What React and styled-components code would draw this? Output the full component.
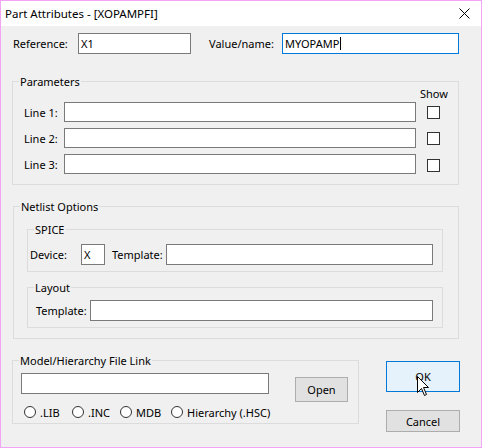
import styled, { createGlobalStyle } from 'styled-components';

// Global reset
const GlobalStyle = createGlobalStyle`
  html, body {
    margin: 0;
    padding: 0;
    background: #ffffff;
  }
  * {
    box-sizing: border-box;
  }
`;

// Styled components
const Window = styled.div`
  position: relative;
  width: 482px;
  height: 448px;
  display: flex;
  flex-direction: column;
  border: 1px solid #f4a4f4;
  background: #f0f0f0;
  font-family: "Noto Sans", "Liberation Sans", sans-serif;
  font-size: 11px;
  color: #000;
`;

const TitleBar = styled.div`
  height: 25px;
  flex: none;
  display: flex;
  align-items: center;
  justify-content: space-between;
  padding: 0 11px 0 4px;
  background: #ffffff;
  font-size: 11.5px;
`;

const Body = styled.div`
  display: flex;
  flex-direction: column;
  padding: 7px 0 0 11px;
`;

const Row = styled.div`
  display: flex;
  align-items: ${(p) => p.$align || 'center'};
  margin-left: ${(p) => p.$indent || 0}px;
  margin-top: ${(p) => p.$top || 0}px;
`;

const Label = styled.span`
  width: ${(p) => p.$w}px;
  flex: none;
  margin-left: ${(p) => p.$ml || 0}px;
  line-height: 15px;
  white-space: nowrap;
`;

const TextBox = styled.div`
  width: ${(p) => p.$w}px;
  height: ${(p) => p.$h || 21}px;
  flex: none;
  display: flex;
  align-items: center;
  padding-left: 2px;
  background: #fff;
  border: 1px solid ${(p) => (p.$focus ? '#0078d7' : '#7a7a7a')};
  white-space: nowrap;
`;

const Caret = styled.span`
  display: inline-block;
  width: 1px;
  height: 13px;
  margin-left: 1px;
  background: #000;
`;

const Group = styled.div`
  position: relative;
  width: ${(p) => p.$w}px;
  flex: none;
  margin-top: ${(p) => p.$top || 0}px;
  margin-left: ${(p) => p.$ml || 0}px;
  padding: ${(p) => p.$pad};
  border: 1px solid #dcdcdc;
`;

const Caption = styled.span`
  position: absolute;
  top: -8px;
  left: 6px;
  padding: 0 1px;
  line-height: 15px;
  background: #f0f0f0;
  white-space: nowrap;
`;

const ParamList = styled.div`
  display: flex;
  flex-direction: column;
  gap: 6px;
`;

const ShowHead = styled.div`
  display: flex;
  justify-content: flex-end;
  height: 16px;
  margin-bottom: -6px;
`;

const CheckCell = styled.div`
  width: 27px;
  flex: none;
  display: flex;
  justify-content: center;
  margin-left: 4px;
  padding-top: ${(p) => p.$nudge || 0}px;
`;

const ShowText = styled.span`
  width: 27px;
  text-align: center;
  line-height: 15px;
`;

const CheckBox = styled.span`
  width: 13px;
  height: 13px;
  background: #fff;
  border: 1px solid #333;
`;

const BottomRow = styled.div`
  display: flex;
  align-items: flex-start;
  margin-top: 21px;
`;

const RadioRow = styled.div`
  display: flex;
  align-items: center;
  height: 16px;
  margin: 2px 0 0 3px;
`;

const RadioItem = styled.label`
  width: ${(p) => p.$w}px;
  flex: none;
  display: flex;
  align-items: center;
  gap: 4px;
  white-space: nowrap;
`;

const RadioDot = styled.span`
  width: 12px;
  height: 12px;
  flex: none;
  border-radius: 50%;
  background: #fff;
  border: 1px solid #333;
`;

const Button = styled.div`
  position: relative;
  width: ${(p) => p.$w}px;
  height: ${(p) => p.$h}px;
  flex: none;
  margin-top: ${(p) => p.$top || 0}px;
  margin-left: ${(p) => p.$ml || 0}px;
  display: flex;
  align-items: center;
  justify-content: center;
  background: ${(p) => (p.$default ? '#e5f1fb' : '#e1e1e1')};
  border: 1px solid ${(p) => (p.$default ? '#0078d7' : '#adadad')};
`;

const ButtonColumn = styled.div`
  display: flex;
  flex-direction: column;
  margin: 1px 0 0 27px;
`;

const Pointer = styled.svg`
  position: absolute;
  left: 30px;
  top: 14px;
`;

const CloseIcon = () => (
  <svg width="11" height="11" viewBox="0 0 11 11">
    <path d="M0.5 0.5 L10.5 10.5 M10.5 0.5 L0.5 10.5" stroke="#000" strokeWidth="1" />
  </svg>
);

const params = ['Line 1:', 'Line 2:', 'Line 3:'];
const radios = [
  { label: '.LIB', w: 48 },
  { label: '.INC', w: 48 },
  { label: 'MDB', w: 51 },
  { label: 'Hierarchy (.HSC)', w: 100 },
];

const App = () => {
  return (
    <Window>
      <GlobalStyle />
      <TitleBar>
        <span>Part Attributes - [XOPAMPFI]</span>
        <CloseIcon />
      </TitleBar>
      <Body>
        <Row $indent={1}>
          <Label $w={65}>Reference:</Label>
          <TextBox $w={113}>X1</TextBox>
          <Label $w={73} $ml={18}>Value/name:</Label>
          <TextBox $w={177} $focus>
            MYOPAMP
            <Caret />
          </TextBox>
        </Row>

        <Group $w={447} $top={27} $pad="4px 11px 10px 11px">
          <Caption>Parameters</Caption>
          <ParamList>
            <ShowHead>
              <ShowText>Show</ShowText>
            </ShowHead>
            {params.map((p, i) => (
              <Row key={p}>
                <Label $w={40}>{p}</Label>
                <TextBox $w={352} $h={20} />
                <CheckCell $nudge={i}>
                  <CheckBox />
                </CheckCell>
              </Row>
            ))}
          </ParamList>
        </Group>

        <Group $w={446} $ml={1} $top={21} $pad="22px 0 10px 13px">
          <Caption>Netlist Options</Caption>
          <Group $w={416} $pad="14px 0 6px 2px">
            <Caption>SPICE</Caption>
            <Row>
              <Label $w={51}>Device:</Label>
              <TextBox $w={24}>X</TextBox>
              <Label $w={54} $ml={7}>Template:</Label>
              <TextBox $w={267} />
            </Row>
          </Group>
          <Group $w={416} $top={15} $pad="12px 0 6px 8px">
            <Caption>Layout</Caption>
            <Row>
              <Label $w={54}>Template:</Label>
              <TextBox $w={343} />
            </Row>
          </Group>
        </Group>

        <BottomRow>
          <Group $w={347} $pad="12px 0 3px 8px">
            <Caption>Model/Hierarchy File Link</Caption>
            <Row $align="flex-start">
              <TextBox $w={248} />
              <Button $w={53} $h={25} $top={4} $ml={26}>Open</Button>
            </Row>
            <RadioRow>
              {radios.map((r) => (
                <RadioItem key={r.label} $w={r.w}>
                  <RadioDot />
                  {r.label}
                </RadioItem>
              ))}
            </RadioRow>
          </Group>
          <ButtonColumn>
            <Button $w={74} $h={31} $default>
              OK
              <Pointer width="13" height="21" viewBox="0 0 13 21">
                <path
                  d="M0.5 0.5 L0.5 16.5 L4.5 12.5 L7.5 19.5 L9.5 18.5 L6.5 11.5 L11.5 11.5 Z"
                  fill="#fff"
                  stroke="#000"
                  strokeWidth="1"
                  strokeLinejoin="miter"
                />
              </Pointer>
            </Button>
            <Button $w={74} $h={22} $top={18}>Cancel</Button>
          </ButtonColumn>
        </BottomRow>
      </Body>
    </Window>
  );
};

export default App;
